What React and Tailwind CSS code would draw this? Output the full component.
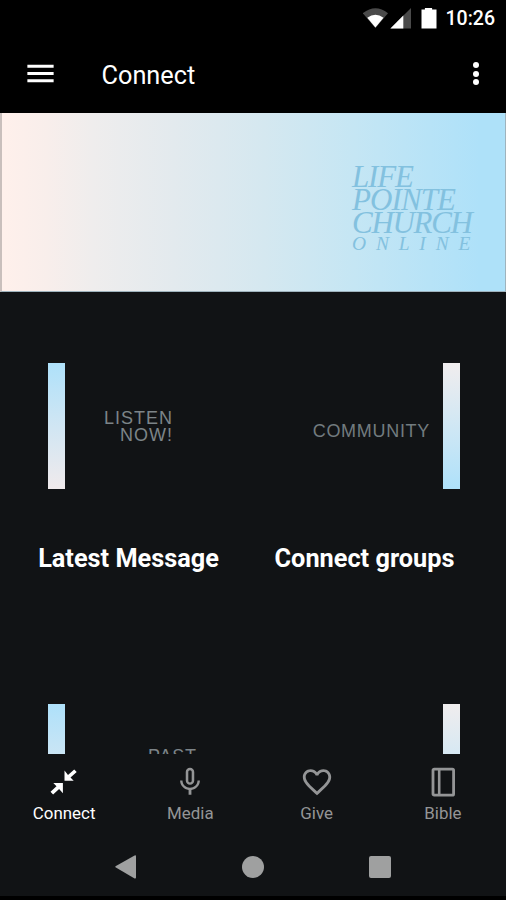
import { MdFavoriteBorder, MdMenu, MdMicNone } from 'react-icons/md'

const TABS = [
  { label: 'Connect', icon: ContractIcon, active: true },
  { label: 'Media', icon: MdMicNone },
  { label: 'Give', icon: MdFavoriteBorder },
  { label: 'Bible', icon: BookIcon },
]

function ContractIcon({ className }) {
  return (
    <svg className={className} viewBox="0 0 34 34" fill="currentColor">
      <path d="M17.5 5.5v10.2h9.2l-3.2-3.2 6.2-5.4-2.5-2.6-6.2 5.5z" />
      <path d="M15.9 28.2V18H6.3l3.2 3.2-6 5.6 2.6 2.6 6-5.4z" />
    </svg>
  )
}

function BookIcon({ className }) {
  return (
    <svg className={className} viewBox="0 0 34 34" fill="none" stroke="currentColor">
      <rect x="7" y="4.1" width="20.6" height="26" rx="1.2" strokeWidth="2.8" />
      <path d="M13.2 4v26" strokeWidth="2.6" />
    </svg>
  )
}

function StatusBar() {
  return (
    <div className="flex h-[36px] shrink-0 items-center justify-end pr-[11px] text-white">
      <svg className="h-[22px] w-[76px]" viewBox="0 0 76 22">
        <path d="M-.2 6.2Q12.4-3.5 25 6.2L12.4 21z" fill="#4a4a4a" />
        <path d="M4.3 10.8Q12.4 4.8 20.5 10.8L12.4 20.5z" fill="#fff" />
        <path d="M27.4 21.4L48 1v20.4z" fill="#4a4a4a" />
        <path d="M27.4 21.4L40.3 8.6v12.8z" fill="#fff" />
        <path d="M58.5 2.5h3.4V.9h7.2v1.6h4.4v19h-15z" fill="#fff" />
      </svg>
      <span className="mt-[2px] ml-[7px] text-[19.5px] font-medium leading-none">10:26</span>
    </div>
  )
}

function AppBar() {
  return (
    <header className="flex h-[77px] shrink-0 items-center pr-[13px] pb-[2px] pl-[22.5px] text-white">
      <MdMenu className="h-[35px] w-[35px]" />
      <h1 className="mt-[4px] ml-[44px] text-[25.3px] leading-none">Connect</h1>
      <div className="ml-auto flex w-[34px] flex-col items-center gap-[2.5px]">
        <span className="size-[6px] rounded-full bg-white" />
        <span className="size-[6px] rounded-full bg-white" />
        <span className="size-[6px] rounded-full bg-white" />
      </div>
    </header>
  )
}

function Banner() {
  return (
    <section className="flex h-[179px] shrink-0 justify-end border-x border-b border-[#9fb3bd] border-l-2 border-l-[#c9bfbc] bg-[linear-gradient(90deg,#fff0eb_0%,#f8eeeb_9%,#efeded_18%,#e3eaee_34%,#d5e8f0_52%,#c5e6f4_70%,#aee1f9_95%,#aee1f9_100%)]">
      <div className="mt-[52px] w-[153px] whitespace-nowrap font-['Liberation_Serif',serif] italic text-[#83c1df]">
        <p className="text-[31px] leading-[23px] tracking-[-1.2px]">LIFE</p>
        <p className="text-[31px] leading-[23px] tracking-[-0.9px]">POINTE</p>
        <p className="text-[31px] leading-[23px] tracking-[-1.3px]">CHURCH</p>
        <p className="text-[19.5px] leading-[20px] tracking-[9.8px]">ONLINE</p>
      </div>
    </section>
  )
}

function CardTitle({ children }) {
  return <h2 className="mt-[56px] text-center text-[25.3px] font-bold leading-[28px] text-white">{children}</h2>
}

function CardGrid() {
  return (
    <main className="grid h-[462px] shrink-0 auto-rows-[341px] grid-cols-2 overflow-hidden">
      <article className="pt-[71px]">
        <div className="flex h-[126px] items-center pl-12">
          <div className="h-full w-[17px] bg-linear-to-b from-[#aee1fa] to-[#f0eaec]" />
          <p className="mt-[2px] ml-[39px] text-right font-['Liberation_Sans',sans-serif] text-[18px] leading-[17px] tracking-[1px] text-[#7c8488]">
            LISTEN<br />NOW!
          </p>
        </div>
        <div className="pl-[4px]">
          <CardTitle>Latest Message</CardTitle>
        </div>
      </article>

      <article className="pt-[71px]">
        <div className="flex h-[126px] items-center justify-end pr-[46px]">
          <p className="mt-[10px] mr-[13px] font-['Liberation_Sans',sans-serif] text-[18px] leading-[17px] tracking-[0.7px] text-[#727b7f]">
            COMMUNITY
          </p>
          <div className="h-full w-[17px] bg-linear-to-b from-[#f0edee] to-[#aee1fa]" />
        </div>
        <div className="pr-[30px]">
          <CardTitle>Connect groups</CardTitle>
        </div>
      </article>

      <article className="pt-[71px]">
        <div className="flex h-[126px] pl-12">
          <div className="h-full w-[17px] bg-linear-to-b from-[#aee1fa] to-[#f0eaec]" />
          <p className="mt-[44px] ml-[83px] font-['Liberation_Sans',sans-serif] text-[18px] leading-[17px] tracking-[0.8px] text-[#7c8488]">
            PAST
          </p>
        </div>
      </article>

      <article className="pt-[71px]">
        <div className="flex h-[126px] justify-end pr-[46px]">
          <div className="h-full w-[17px] bg-linear-to-b from-[#f0edee] to-[#aee1fa]" />
        </div>
      </article>
    </main>
  )
}

function TabBar() {
  return (
    <nav className="grid h-[80px] shrink-0 grid-cols-4 pt-[11px] pl-px">
      {TABS.map(({ label, icon: Icon, active }) => (
        <div
          key={label}
          className={`flex flex-col items-center ${active ? 'text-white' : 'text-[#949596]'}`}
        >
          <Icon className="size-[34px]" />
          <span className="mt-[4px] text-[16.9px] leading-[20px]">{label}</span>
        </div>
      ))}
    </nav>
  )
}

function SystemNav() {
  return (
    <div className="flex h-[66px] shrink-0 items-start justify-center gap-[105px] border-b-4 border-black pt-[21px] text-[#9fa0a0]">
      <svg className="h-[24px] w-[22px]" viewBox="0 0 22 24" fill="currentColor">
        <path d="M.5 11.2Q0 12 .9 12.6L19.6 23.4Q21 23.8 21 22.5V1.2Q21-.1 19.6.5z" />
      </svg>
      <span className="mt-[1px] size-[22px] rounded-full bg-[#9fa0a0]" />
      <span className="mt-[1px] size-[22px] rounded-[2px] bg-[#9fa0a0]" />
    </div>
  )
}

export default function App() {
  return (
    <div className="flex h-[900px] w-[506px] flex-col overflow-hidden bg-[#111315] font-['Roboto',sans-serif]">
      <div className="shrink-0 bg-black">
        <StatusBar />
        <AppBar />
      </div>
      <Banner />
      <CardGrid />
      <TabBar />
      <SystemNav />
    </div>
  )
}
